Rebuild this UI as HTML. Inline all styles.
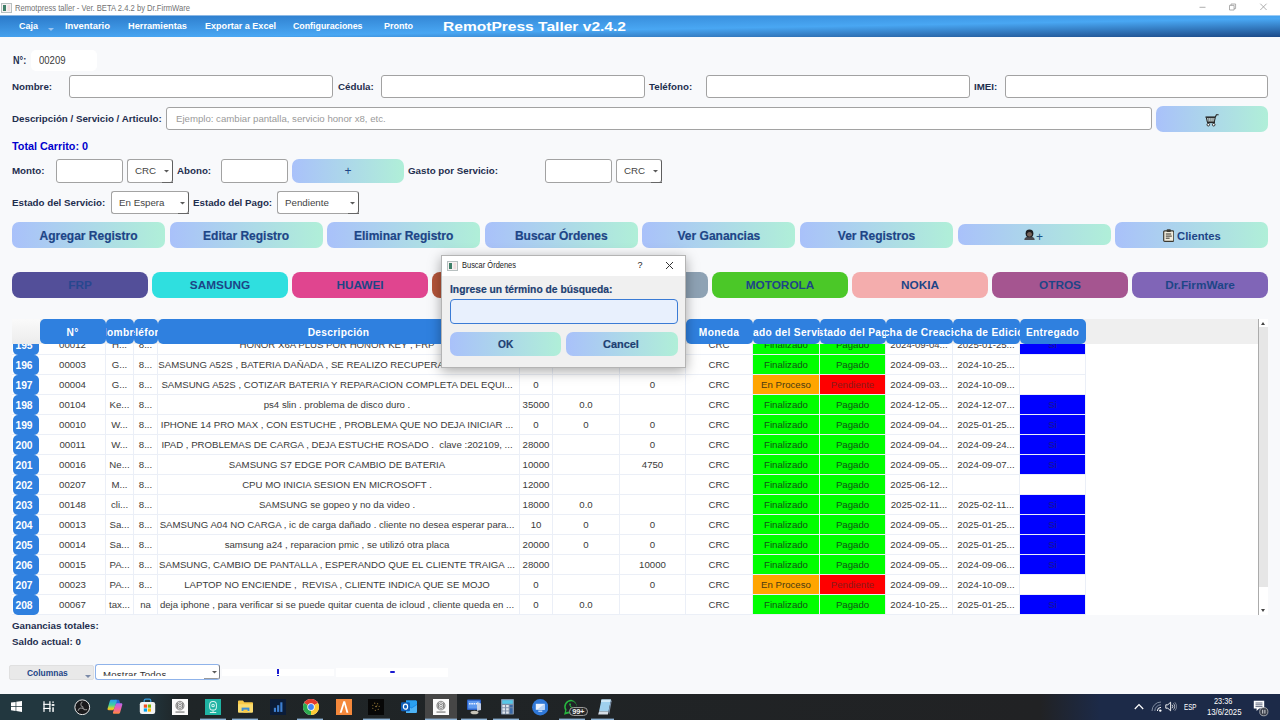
<!DOCTYPE html>
<html><head><meta charset="utf-8">
<style>
*{box-sizing:border-box;margin:0;padding:0}
html,body{width:1280px;height:720px;overflow:hidden;background:#f8f9fb;font-family:"Liberation Sans",sans-serif;}
.a{position:absolute}
.lbl{position:absolute;font-weight:bold;font-size:9.75px;color:#1e2e4e;white-space:nowrap;line-height:14px}
.inp{position:absolute;background:#fff;border:1px solid #a2a2a2;border-radius:3px}
.sel{position:absolute;background:#fff;border:1px solid #a3a3a3;border-right-color:#5e5e5e;border-radius:3px;font-size:9.75px;color:#444;line-height:22px;padding-left:7px;white-space:nowrap}
.sel i{position:absolute;right:3px;top:10px;width:5px;height:2.5px;background:#5a5a5a;clip-path:polygon(0 0,100% 0,50% 100%)}
.sel b{position:absolute;right:-1px;bottom:-1px;width:11px;height:1.5px;background:#666}
.gbtn{position:absolute;border-radius:7px;background:linear-gradient(90deg,#a9c1fa,#b0efd8);color:#1d4587;font-weight:bold;font-size:12px;text-align:center;white-space:nowrap}
.bbtn{position:absolute;top:272px;height:26px;width:136px;border-radius:8px;color:#1d4587;font-weight:bold;font-size:11.8px;text-align:center;line-height:27px}
#titlebar{left:0;top:0;width:1280px;height:16px;background:#fff}
#menubar{left:0;top:15px;width:1280px;height:22px;background:#3a8ee0}
.mi{position:absolute;top:5px;color:#fff;font-weight:bold;font-size:9.15px;line-height:12px;white-space:nowrap}

.row{position:absolute;left:0;width:1074px;height:20px;border-bottom:1px solid #ebeff7}
.rh{position:absolute;left:1px;top:0;width:26px;height:20px;padding-top:1px;background:#2f80df;border-radius:5px;color:#fff;font-weight:bold;font-size:10.3px;line-height:20px;text-align:center;padding-right:4px}
.c{position:absolute;top:0;height:19px;font-size:9.65px;line-height:20px;color:#3a3a3a;text-align:center;white-space:nowrap;overflow:hidden;border-right:1px solid #ebeff7}
.th{position:absolute;top:0;height:25px;background:#2f80df;border-radius:5px;color:#fff;font-weight:bold;font-size:10.2px;line-height:28.5px;text-align:center;white-space:nowrap;overflow:hidden;letter-spacing:0.3px}
.th span{position:absolute;left:50%;top:0;transform:translateX(-50%)}
</style></head><body>
<div id="titlebar" class="a">
  <svg class="a" style="left:1px;top:3px" width="11" height="10" viewBox="0 0 11 10"><rect x="0.5" y="0.5" width="10" height="9" fill="#f6f2f2" stroke="#b8c0c0"/><rect x="2" y="2" width="3" height="6" fill="#3f7f68"/><rect x="6.5" y="2" width="2.5" height="6" fill="#f0dede"/></svg>
  <div class="a" style="left:15px;top:2px;white-space:nowrap;transform-origin:0 0;transform:scaleX(0.8872);font-family:'Liberation Sans',sans-serif;font-size:8.6px;line-height:12px;color:#737373;">Remotpress taller - Ver. BETA 2.4.2 by Dr.FirmWare</div>
  <svg class="a" style="left:1198px;top:3px" width="72" height="10" viewBox="0 0 72 10"><g stroke="#9a9a9a" stroke-width="0.8" fill="none"><path d="M1.500 4.300h6"/><path d="M31.500 2.400h4.600v4.600h-4.600z M33 2.400v-1.400h4.600v4.600h-1.500"/><path d="M62.300 0.700l6.300 6.300M68.600 0.700l-6.300 6.300"/></g></svg>
</div>
<div id="menubar" class="a">
<svg class="a" style="left:0;top:0" width="1280" height="22"><defs><linearGradient id="mb" x1="0" y1="0" x2="1" y2="1"><stop offset="0" stop-color="#2a78c8"/><stop offset="0.58" stop-color="#49a7f3"/><stop offset="1" stop-color="#1c4a88"/></linearGradient></defs><rect width="1280" height="22" fill="url(#mb)"/><rect width="1280" height="1" fill="#fff" opacity="0.45"/></svg>
<div class="a" style="left:19px;top:4.8px;white-space:nowrap;transform-origin:0 0;transform:scaleX(0.9375);font-family:'Liberation Sans',sans-serif;font-weight:bold;font-size:9.6px;line-height:12px;color:#fff;">Caja</div>
<div class="a" style="left:65px;top:4.8px;white-space:nowrap;transform-origin:0 0;transform:scaleX(0.9813);font-family:'Liberation Sans',sans-serif;font-weight:bold;font-size:9.6px;line-height:12px;color:#fff;">Inventario</div>
<div class="a" style="left:128px;top:4.8px;white-space:nowrap;transform-origin:0 0;transform:scaleX(0.9620);font-family:'Liberation Sans',sans-serif;font-weight:bold;font-size:9.6px;line-height:12px;color:#fff;">Herramientas</div>
<div class="a" style="left:205px;top:4.8px;white-space:nowrap;transform-origin:0 0;transform:scaleX(0.9441);font-family:'Liberation Sans',sans-serif;font-weight:bold;font-size:9.6px;line-height:12px;color:#fff;">Exportar a Excel</div>
<div class="a" style="left:293px;top:4.8px;white-space:nowrap;transform-origin:0 0;transform:scaleX(0.9181);font-family:'Liberation Sans',sans-serif;font-weight:bold;font-size:9.6px;line-height:12px;color:#fff;">Configuraciones</div>
<div class="a" style="left:384px;top:4.8px;white-space:nowrap;transform-origin:0 0;transform:scaleX(0.9378);font-family:'Liberation Sans',sans-serif;font-weight:bold;font-size:9.6px;line-height:12px;color:#fff;">Pronto</div>
<div class="a" style="left:442.5px;top:2.5px;white-space:nowrap;transform-origin:0 0;transform:scaleX(1.1793);font-family:'Liberation Sans',sans-serif;font-weight:bold;font-size:13.2px;line-height:18px;color:#fff;">RemotPress Taller v2.4.2</div>

  <div class="a" style="left:48px;top:13px;border:3px solid transparent;border-top:3px solid #9cc4f0;border-bottom:0"></div>
</div>

<!-- form -->
<div class="a" style="left:12.5px;top:53px;white-space:nowrap;transform-origin:0 0;transform:scaleX(0.8323);font-family:'Liberation Sans',sans-serif;font-weight:bold;font-size:10.9px;line-height:14px;color:#1e2e4e;">N°:</div>
<div class="a" style="left:31px;top:50px;width:66px;height:21px;background:#fff;border-radius:5px;"><div class="a" style="left:8px;top:0px;white-space:nowrap;transform-origin:0 0;transform:scaleX(0.8747);font-family:'Liberation Sans',sans-serif;font-size:10.9px;line-height:21px;color:#3a3a3a;">00209</div></div>
<div class="lbl" style="left:12px;top:80px">Nombre:</div>
<div class="inp" style="left:69px;top:75px;width:264px;height:23px"></div>
<div class="lbl" style="left:338px;top:80px">Cédula:</div>
<div class="inp" style="left:381px;top:75px;width:264px;height:23px"></div>
<div class="lbl" style="left:649px;top:80px">Teléfono:</div>
<div class="inp" style="left:706px;top:75px;width:264px;height:23px"></div>
<div class="lbl" style="left:974px;top:80px">IMEI:</div>
<div class="inp" style="left:1005px;top:75px;width:263px;height:23px"></div>

<div class="lbl" style="left:12px;top:112px">Descripción / Servicio / Articulo:</div>
<div class="inp" style="left:166px;top:107px;width:986px;height:23px;font-size:9.65px;line-height:21px;color:#9a9a9a;padding-left:9px">Ejemplo: cambiar pantalla, servicio honor x8, etc.</div>
<div class="gbtn" style="left:1156px;top:106px;width:112px;height:26px"><svg class="a" style="left:49px;top:7.500px" width="14" height="13" viewBox="0 0 14 13"><path d="M0.800 3h9.600l1-2.300h1.800" fill="none" stroke="#222" stroke-width="1.100" stroke-linecap="round"/><path d="M1.300 3.400h9l-1 4.600H2.300z" fill="#b9c4c4" stroke="#222" stroke-width="1"/><path d="M3.600 4v3.600M5.800 4v3.600M8 4v3.600" stroke="#6f7c7c" stroke-width="0.800"/><path d="M2 8.600h8" stroke="#222" stroke-width="1.100"/><circle cx="3.300" cy="10.700" r="1.300" fill="#fff" stroke="#222" stroke-width="0.900"/><circle cx="8.700" cy="10.700" r="1.300" fill="#fff" stroke="#222" stroke-width="0.900"/></svg></div>

<div class="a" style="left:12px;top:139px;font-weight:bold;font-size:10.8px;line-height:14px;color:#0000cd;white-space:nowrap">Total Carrito: 0</div>

<div class="lbl" style="left:12px;top:164px">Monto:</div>
<div class="inp" style="left:56px;top:159px;width:67px;height:24px"></div>
<div class="sel" style="left:127px;top:159px;width:46px;height:24px">CRC<i></i><b></b></div>
<div class="lbl" style="left:177px;top:164px">Abono:</div>
<div class="inp" style="left:221px;top:159px;width:67px;height:24px"></div>
<div class="gbtn" style="left:292px;top:159px;width:112px;height:24px;font-weight:normal;line-height:24px;font-size:12px">+</div>
<div class="lbl" style="left:408px;top:164px">Gasto por Servicio:</div>
<div class="inp" style="left:545px;top:159px;width:67px;height:24px"></div>
<div class="sel" style="left:616px;top:159px;width:46px;height:24px">CRC<i></i><b></b></div>

<div class="lbl" style="left:12px;top:196px">Estado del Servicio:</div>
<div class="sel" style="left:111px;top:191px;width:78px;height:23px;line-height:21px">En Espera<i></i><b></b></div>
<div class="lbl" style="left:193px;top:196px">Estado del Pago:</div>
<div class="sel" style="left:277px;top:191px;width:82px;height:23px;line-height:21px">Pendiente<i></i><b></b></div>

<!-- action buttons -->
<div class="gbtn" style="left:12.0px;top:222px;width:153px;height:26px;line-height:28.5px;-webkit-text-stroke:0.2px #1d4587">Agregar Registro</div>
<div class="gbtn" style="left:169.6px;top:222px;width:153px;height:26px;line-height:28.5px;-webkit-text-stroke:0.2px #1d4587">Editar Registro</div>
<div class="gbtn" style="left:327.2px;top:222px;width:153px;height:26px;line-height:28.5px;-webkit-text-stroke:0.2px #1d4587">Eliminar Registro</div>
<div class="gbtn" style="left:484.8px;top:222px;width:153px;height:26px;line-height:28.5px;-webkit-text-stroke:0.2px #1d4587">Buscar Órdenes</div>
<div class="gbtn" style="left:642.4px;top:222px;width:153px;height:26px;line-height:28.5px;-webkit-text-stroke:0.2px #1d4587">Ver Ganancias</div>
<div class="gbtn" style="left:800.0px;top:222px;width:153px;height:26px;line-height:28.5px;-webkit-text-stroke:0.2px #1d4587">Ver Registros</div>
<div class="gbtn" style="left:957.6px;top:224px;width:153px;height:21px"><svg class="a" style="left:66.500px;top:5px" width="11" height="11" viewBox="0 0 11 11"><path d="M0.300 11c0-2.300 1.500-3.600 5.200-3.600s5.200 1.300 5.200 3.600z" fill="#4a4a50"/><circle cx="5.500" cy="4.400" r="3.900" fill="#1e1e22"/><ellipse cx="5.500" cy="5.300" rx="2.500" ry="2.400" fill="#76635a"/><path d="M2.600 4.300c1-1.600 4.800-1.600 5.800 0l0.200-1.600c-1-2.200-5.200-2.200-6.200 0z" fill="#1e1e22"/></svg><div class="a" style="left:78.500px;top:5.5px;font-size:12px;line-height:14px;font-weight:normal;color:#1d5587">+</div></div>
<div class="gbtn" style="left:1115.2px;top:222px;width:153px;height:26px"><svg class="a" style="left:47.500px;top:6.500px" width="11.500" height="13" viewBox="0 0 11.500 13"><rect x="0.700" y="1.900" width="10.100" height="10.500" rx="1" fill="#f1ecdc" stroke="#3c3a32" stroke-width="1.200"/><rect x="3.600" y="0.300" width="4.300" height="2.600" rx="0.900" fill="#3c3a32"/><path d="M2.800 5h5.400M2.800 7.100h6M2.800 9.200h3.800" stroke="#33302a" stroke-width="1"/></svg><div class="a" style="left:62px;top:6.5px;white-space:nowrap;transform-origin:0 0;transform:scaleX(0.9710);font-family:'Liberation Sans',sans-serif;font-weight:bold;font-size:11.6px;line-height:14px;color:#1d4587;">Clientes</div></div>

<!-- brand buttons -->
<div class="bbtn" style="left:12px;background:#534f99;color:#27478f">FRP</div>
<div class="bbtn" style="left:152px;background:#2fdfdf;color:#1d4587">SAMSUNG</div>
<div class="bbtn" style="left:292px;background:#e0458f;color:#1d4587">HUAWEI</div>
<div class="bbtn" style="left:432px;background:#b4553a;color:#1d4587">XIAOMI</div>
<div class="bbtn" style="left:572px;background:#8ea2b4;color:#1d4587">LG</div>
<div class="bbtn" style="left:712px;background:#4bc828;color:#1d4587">MOTOROLA</div>
<div class="bbtn" style="left:852px;background:#f4adad;color:#1d4587">NOKIA</div>
<div class="bbtn" style="left:992px;background:#a55590;color:#1d4587">OTROS</div>
<div class="bbtn" style="left:1132px;background:#8065b7;color:#1d4587">Dr.FirmWare</div>


<!-- table -->
<div id="table" class="a" style="left:12px;top:319px;width:1256px;height:296px;background:#fff;overflow:hidden">
<div class="row" style="top:16px"><div class="rh">195</div><div class="c" style="left:28px;width:66px;">00012</div><div class="c" style="left:94px;width:28px;">H...</div><div class="c" style="left:122px;width:24px;">8...</div><div class="c" style="left:146px;width:362px;padding-right:3px;">HONOR X6A PLUS POR HONOR KEY , FRP</div><div class="c" style="left:508px;width:33px;">15000</div><div class="c" style="left:541px;width:67px;"></div><div class="c" style="left:608px;width:66px;"></div><div class="c" style="left:674px;width:67px;">CRC</div><div class="c" style="left:741px;width:67px;background:#00ff00;color:#14501a;">Finalizado</div><div class="c" style="left:808px;width:66px;background:#00ff00;color:#14501a;">Pagado</div><div class="c" style="left:874px;width:67px;">2024-09-04...</div><div class="c" style="left:941px;width:67px;">2025-01-25...</div><div class="c" style="left:1008px;width:66px;background:#0000ff;color:#1a1a8a;">Si</div></div>
<div class="row" style="top:36px"><div class="rh">196</div><div class="c" style="left:28px;width:66px;">00003</div><div class="c" style="left:94px;width:28px;">G...</div><div class="c" style="left:122px;width:24px;">8...</div><div class="c" style="left:146px;width:362px;padding-right:3px;">SAMSUNG A52S , BATERIA DAÑADA , SE REALIZO RECUPERACION DE DAT ...</div><div class="c" style="left:508px;width:33px;">12000</div><div class="c" style="left:541px;width:67px;">0</div><div class="c" style="left:608px;width:66px;">0</div><div class="c" style="left:674px;width:67px;">CRC</div><div class="c" style="left:741px;width:67px;background:#00ff00;color:#14501a;">Finalizado</div><div class="c" style="left:808px;width:66px;background:#00ff00;color:#14501a;">Pagado</div><div class="c" style="left:874px;width:67px;">2024-09-03...</div><div class="c" style="left:941px;width:67px;">2024-10-25...</div><div class="c" style="left:1008px;width:66px;"></div></div>
<div class="row" style="top:56px"><div class="rh">197</div><div class="c" style="left:28px;width:66px;">00004</div><div class="c" style="left:94px;width:28px;">G...</div><div class="c" style="left:122px;width:24px;">8...</div><div class="c" style="left:146px;width:362px;padding-right:3px;">SAMSUNG A52S , COTIZAR BATERIA Y REPARACION COMPLETA DEL EQUI...</div><div class="c" style="left:508px;width:33px;">0</div><div class="c" style="left:541px;width:67px;"></div><div class="c" style="left:608px;width:66px;">0</div><div class="c" style="left:674px;width:67px;">CRC</div><div class="c" style="left:741px;width:67px;background:#ffa500;color:#4a3a14;">En Proceso</div><div class="c" style="left:808px;width:66px;background:#ff0000;color:#8a1a1a;">Pendiente</div><div class="c" style="left:874px;width:67px;">2024-09-03...</div><div class="c" style="left:941px;width:67px;">2024-10-09...</div><div class="c" style="left:1008px;width:66px;"></div></div>
<div class="row" style="top:76px"><div class="rh">198</div><div class="c" style="left:28px;width:66px;">00104</div><div class="c" style="left:94px;width:28px;">Ke...</div><div class="c" style="left:122px;width:24px;">8...</div><div class="c" style="left:146px;width:362px;padding-right:3px;">ps4 slin . problema de disco duro .</div><div class="c" style="left:508px;width:33px;">35000</div><div class="c" style="left:541px;width:67px;">0.0</div><div class="c" style="left:608px;width:66px;"></div><div class="c" style="left:674px;width:67px;">CRC</div><div class="c" style="left:741px;width:67px;background:#00ff00;color:#14501a;">Finalizado</div><div class="c" style="left:808px;width:66px;background:#00ff00;color:#14501a;">Pagado</div><div class="c" style="left:874px;width:67px;">2024-12-05...</div><div class="c" style="left:941px;width:67px;">2024-12-07...</div><div class="c" style="left:1008px;width:66px;background:#0000ff;color:#1a1a8a;">Si</div></div>
<div class="row" style="top:96px"><div class="rh">199</div><div class="c" style="left:28px;width:66px;">00010</div><div class="c" style="left:94px;width:28px;">W...</div><div class="c" style="left:122px;width:24px;">8...</div><div class="c" style="left:146px;width:362px;padding-right:3px;">IPHONE 14 PRO MAX , CON ESTUCHE , PROBLEMA QUE NO DEJA INICIAR ...</div><div class="c" style="left:508px;width:33px;">0</div><div class="c" style="left:541px;width:67px;">0</div><div class="c" style="left:608px;width:66px;">0</div><div class="c" style="left:674px;width:67px;">CRC</div><div class="c" style="left:741px;width:67px;background:#00ff00;color:#14501a;">Finalizado</div><div class="c" style="left:808px;width:66px;background:#00ff00;color:#14501a;">Pagado</div><div class="c" style="left:874px;width:67px;">2024-09-04...</div><div class="c" style="left:941px;width:67px;">2025-01-25...</div><div class="c" style="left:1008px;width:66px;background:#0000ff;color:#1a1a8a;">Si</div></div>
<div class="row" style="top:116px"><div class="rh">200</div><div class="c" style="left:28px;width:66px;">00011</div><div class="c" style="left:94px;width:28px;">W...</div><div class="c" style="left:122px;width:24px;">8...</div><div class="c" style="left:146px;width:362px;padding-right:3px;">IPAD , PROBLEMAS DE CARGA , DEJA ESTUCHE ROSADO .&nbsp; clave :202109, ...</div><div class="c" style="left:508px;width:33px;">28000</div><div class="c" style="left:541px;width:67px;"></div><div class="c" style="left:608px;width:66px;">0</div><div class="c" style="left:674px;width:67px;">CRC</div><div class="c" style="left:741px;width:67px;background:#00ff00;color:#14501a;">Finalizado</div><div class="c" style="left:808px;width:66px;background:#00ff00;color:#14501a;">Pagado</div><div class="c" style="left:874px;width:67px;">2024-09-04...</div><div class="c" style="left:941px;width:67px;">2024-09-24...</div><div class="c" style="left:1008px;width:66px;background:#0000ff;color:#1a1a8a;">Si</div></div>
<div class="row" style="top:136px"><div class="rh">201</div><div class="c" style="left:28px;width:66px;">00016</div><div class="c" style="left:94px;width:28px;">Ne...</div><div class="c" style="left:122px;width:24px;">8...</div><div class="c" style="left:146px;width:362px;padding-right:3px;">SAMSUNG S7 EDGE POR CAMBIO DE BATERIA</div><div class="c" style="left:508px;width:33px;">10000</div><div class="c" style="left:541px;width:67px;"></div><div class="c" style="left:608px;width:66px;">4750</div><div class="c" style="left:674px;width:67px;">CRC</div><div class="c" style="left:741px;width:67px;background:#00ff00;color:#14501a;">Finalizado</div><div class="c" style="left:808px;width:66px;background:#00ff00;color:#14501a;">Pagado</div><div class="c" style="left:874px;width:67px;">2024-09-05...</div><div class="c" style="left:941px;width:67px;">2024-09-07...</div><div class="c" style="left:1008px;width:66px;background:#0000ff;color:#1a1a8a;">Si</div></div>
<div class="row" style="top:156px"><div class="rh">202</div><div class="c" style="left:28px;width:66px;">00207</div><div class="c" style="left:94px;width:28px;">M...</div><div class="c" style="left:122px;width:24px;">8...</div><div class="c" style="left:146px;width:362px;padding-right:3px;">CPU MO INICIA SESION EN MICROSOFT .</div><div class="c" style="left:508px;width:33px;">12000</div><div class="c" style="left:541px;width:67px;"></div><div class="c" style="left:608px;width:66px;"></div><div class="c" style="left:674px;width:67px;">CRC</div><div class="c" style="left:741px;width:67px;background:#00ff00;color:#14501a;">Finalizado</div><div class="c" style="left:808px;width:66px;background:#00ff00;color:#14501a;">Pagado</div><div class="c" style="left:874px;width:67px;">2025-06-12...</div><div class="c" style="left:941px;width:67px;"></div><div class="c" style="left:1008px;width:66px;"></div></div>
<div class="row" style="top:176px"><div class="rh">203</div><div class="c" style="left:28px;width:66px;">00148</div><div class="c" style="left:94px;width:28px;">cli...</div><div class="c" style="left:122px;width:24px;">8...</div><div class="c" style="left:146px;width:362px;padding-right:3px;">SAMSUNG se gopeo y no da video .</div><div class="c" style="left:508px;width:33px;">18000</div><div class="c" style="left:541px;width:67px;">0.0</div><div class="c" style="left:608px;width:66px;"></div><div class="c" style="left:674px;width:67px;">CRC</div><div class="c" style="left:741px;width:67px;background:#00ff00;color:#14501a;">Finalizado</div><div class="c" style="left:808px;width:66px;background:#00ff00;color:#14501a;">Pagado</div><div class="c" style="left:874px;width:67px;">2025-02-11...</div><div class="c" style="left:941px;width:67px;">2025-02-11...</div><div class="c" style="left:1008px;width:66px;background:#0000ff;color:#1a1a8a;">Si</div></div>
<div class="row" style="top:196px"><div class="rh">204</div><div class="c" style="left:28px;width:66px;">00013</div><div class="c" style="left:94px;width:28px;">Sa...</div><div class="c" style="left:122px;width:24px;">8...</div><div class="c" style="left:146px;width:362px;padding-right:3px;">SAMSUNG A04 NO CARGA , ic de carga dañado . cliente no desea esperar para...</div><div class="c" style="left:508px;width:33px;">10</div><div class="c" style="left:541px;width:67px;">0</div><div class="c" style="left:608px;width:66px;">0</div><div class="c" style="left:674px;width:67px;">CRC</div><div class="c" style="left:741px;width:67px;background:#00ff00;color:#14501a;">Finalizado</div><div class="c" style="left:808px;width:66px;background:#00ff00;color:#14501a;">Pagado</div><div class="c" style="left:874px;width:67px;">2024-09-05...</div><div class="c" style="left:941px;width:67px;">2025-01-25...</div><div class="c" style="left:1008px;width:66px;background:#0000ff;color:#1a1a8a;">Si</div></div>
<div class="row" style="top:216px"><div class="rh">205</div><div class="c" style="left:28px;width:66px;">00014</div><div class="c" style="left:94px;width:28px;">Sa...</div><div class="c" style="left:122px;width:24px;">8...</div><div class="c" style="left:146px;width:362px;padding-right:3px;">samsung a24 , reparacion pmic , se utilizó otra placa</div><div class="c" style="left:508px;width:33px;">20000</div><div class="c" style="left:541px;width:67px;">0</div><div class="c" style="left:608px;width:66px;">0</div><div class="c" style="left:674px;width:67px;">CRC</div><div class="c" style="left:741px;width:67px;background:#00ff00;color:#14501a;">Finalizado</div><div class="c" style="left:808px;width:66px;background:#00ff00;color:#14501a;">Pagado</div><div class="c" style="left:874px;width:67px;">2024-09-05...</div><div class="c" style="left:941px;width:67px;">2025-01-25...</div><div class="c" style="left:1008px;width:66px;background:#0000ff;color:#1a1a8a;">Si</div></div>
<div class="row" style="top:236px"><div class="rh">206</div><div class="c" style="left:28px;width:66px;">00015</div><div class="c" style="left:94px;width:28px;">PA...</div><div class="c" style="left:122px;width:24px;">8...</div><div class="c" style="left:146px;width:362px;padding-right:3px;">SAMSUNG, CAMBIO DE PANTALLA , ESPERANDO QUE EL CLIENTE TRAIGA ...</div><div class="c" style="left:508px;width:33px;">28000</div><div class="c" style="left:541px;width:67px;"></div><div class="c" style="left:608px;width:66px;">10000</div><div class="c" style="left:674px;width:67px;">CRC</div><div class="c" style="left:741px;width:67px;background:#00ff00;color:#14501a;">Finalizado</div><div class="c" style="left:808px;width:66px;background:#00ff00;color:#14501a;">Pagado</div><div class="c" style="left:874px;width:67px;">2024-09-05...</div><div class="c" style="left:941px;width:67px;">2024-09-06...</div><div class="c" style="left:1008px;width:66px;background:#0000ff;color:#1a1a8a;">Si</div></div>
<div class="row" style="top:256px"><div class="rh">207</div><div class="c" style="left:28px;width:66px;">00023</div><div class="c" style="left:94px;width:28px;">PA...</div><div class="c" style="left:122px;width:24px;">8...</div><div class="c" style="left:146px;width:362px;padding-right:3px;">LAPTOP NO ENCIENDE ,&nbsp; REVISA , CLIENTE INDICA QUE SE MOJO</div><div class="c" style="left:508px;width:33px;">0</div><div class="c" style="left:541px;width:67px;"></div><div class="c" style="left:608px;width:66px;">0</div><div class="c" style="left:674px;width:67px;">CRC</div><div class="c" style="left:741px;width:67px;background:#ffa500;color:#4a3a14;">En Proceso</div><div class="c" style="left:808px;width:66px;background:#ff0000;color:#8a1a1a;">Pendiente</div><div class="c" style="left:874px;width:67px;">2024-09-09...</div><div class="c" style="left:941px;width:67px;">2024-10-09...</div><div class="c" style="left:1008px;width:66px;"></div></div>
<div class="row" style="top:276px"><div class="rh">208</div><div class="c" style="left:28px;width:66px;">00067</div><div class="c" style="left:94px;width:28px;">tax...</div><div class="c" style="left:122px;width:24px;">na</div><div class="c" style="left:146px;width:362px;padding-right:3px;">deja iphone , para verificar si se puede quitar cuenta de icloud , cliente queda en ...</div><div class="c" style="left:508px;width:33px;">0</div><div class="c" style="left:541px;width:67px;">0.0</div><div class="c" style="left:608px;width:66px;"></div><div class="c" style="left:674px;width:67px;">CRC</div><div class="c" style="left:741px;width:67px;background:#00ff00;color:#14501a;">Finalizado</div><div class="c" style="left:808px;width:66px;background:#00ff00;color:#14501a;">Pagado</div><div class="c" style="left:874px;width:67px;">2024-10-25...</div><div class="c" style="left:941px;width:67px;">2025-01-25...</div><div class="c" style="left:1008px;width:66px;background:#0000ff;color:#1a1a8a;">Si</div></div>
<div class="a" style="left:0;top:0;width:1246px;height:25px;background:#efefef"></div><div class="a" style="left:0;top:0;width:28px;height:25px;background:linear-gradient(180deg,#fafafa,#ececec)"></div><div class="th" style="left:27.5px;width:66px"><span>N°</span></div><div class="th" style="left:93.5px;width:28px"><span>Nombre</span></div><div class="th" style="left:121.5px;width:24px"><span>Teléfono</span></div><div class="th" style="left:145.5px;width:362px"><span>Descripción</span></div><div class="th" style="left:507.5px;width:33px"><span>Monto</span></div><div class="th" style="left:540.5px;width:67px"><span>Abono</span></div><div class="th" style="left:607.5px;width:66px"><span>Gasto</span></div><div class="th" style="left:673.5px;width:67px"><span>Moneda</span></div><div class="th" style="left:740.5px;width:67px"><span>Estado del Servicio</span></div><div class="th" style="left:807.5px;width:66px"><span>Estado del Pago</span></div><div class="th" style="left:873.5px;width:67px"><span>Fecha de Creación</span></div><div class="th" style="left:940.5px;width:67px"><span>Fecha de Edición</span></div><div class="th" style="left:1007.5px;width:66px"><span>Entregado</span></div><div class="a" style="left:1246px;top:0;width:10px;height:296px;background:#fff;border-left:1px solid #ababab"></div><div class="a" style="left:1247px;top:8px;width:9px;height:260px;background:#e6e6e6"></div><div class="a" style="left:1249px;top:3px;border:2.5px solid transparent;border-bottom:3px solid #444;border-top:0"></div><div class="a" style="left:1249px;top:290px;border:2.5px solid transparent;border-top:3px solid #444;border-bottom:0"></div>
</div>

<div class="lbl" style="left:12px;top:619px">Ganancias totales:</div>
<div class="lbl" style="left:12px;top:635px">Saldo actual: 0</div>


<!-- bottom controls -->
<div class="a" style="left:9px;top:665px;width:85px;height:15px;background:#e9e9e9;border:1px solid #e0e0e0;border-radius:2px;"><div class="a" style="left:17.2px;top:-0.3px;white-space:nowrap;transform-origin:0 0;transform:scaleX(0.9001);font-family:'Liberation Sans',sans-serif;font-weight:bold;font-size:9.4px;line-height:13px;color:#1d4587;">Columnas</div></div>
<div class="a" style="left:85px;top:675px;border:3px solid transparent;border-top:3px solid #7a8aa8;border-bottom:0"></div>
<div class="a" style="left:95px;top:664px;width:125px;height:16px;background:#fff;border:1px solid #8fb3ea;border-right-color:#7a7f88;border-radius:3px;overflow:hidden"><div class="a" style="left:7px;top:4px;height:6.5px;overflow:hidden;font-size:9.65px;line-height:12px;color:#333;white-space:nowrap;letter-spacing:0.2px">Mostrar Todos</div><div class="a" style="left:116px;top:6px;width:5px;height:2.5px;background:#5a5a5a;clip-path:polygon(0 0,100% 0,50% 100%)"></div><div class="a" style="left:108px;top:13px;width:16px;height:2px;background:#9a9a9a"></div></div>
<div class="a" style="left:222px;top:669px;width:112px;height:7px;background:#fff"></div>
<div class="a" style="left:336px;top:668px;width:112px;height:9px;background:#fff"></div>
<div class="a" style="left:277px;top:669px;width:2px;height:5px;background:#1a1ad0"></div>
<div class="a" style="left:277px;top:675px;width:2px;height:1px;background:#1a1ad0"></div>
<div class="a" style="left:389.5px;top:671px;width:5px;height:2px;background:#1a1ad0;border-radius:1px"></div>

<!-- dialog -->
<div class="a" style="left:441px;top:255px;width:245px;height:113px;background:#f0f0f0;border:1px solid #b4b4b4;box-shadow:0 3px 12px rgba(0,0,0,.35)">
  <div class="a" style="left:0;top:0;width:243px;height:20px;background:#fff"></div>
  <svg class="a" style="left:5px;top:5px" width="11" height="10" viewBox="0 0 11 10"><rect x="0.5" y="0.5" width="10" height="9" fill="#f6f2f2" stroke="#b8c0c0"/><rect x="2" y="2" width="3" height="6" fill="#3f7f68"/><rect x="6.5" y="2" width="2.5" height="6" fill="#f0dede"/></svg>
<div class="a" style="left:20px;top:3px;white-space:nowrap;transform-origin:0 0;transform:scaleX(0.8694);font-family:'Liberation Sans',sans-serif;font-size:8.6px;line-height:13px;color:#222;">Buscar Órdenes</div>
  <div class="a" style="left:195.5px;top:3px;font-size:9px;line-height:13px;color:#222">?</div>
  <svg class="a" style="left:223px;top:5px" width="9" height="9" viewBox="0 0 9 9"><path d="M1 1l7 7M8 1l-7 7" stroke="#333" stroke-width="1" fill="none"/></svg>
<div class="a" style="left:7.6px;top:25.5px;white-space:nowrap;transform-origin:0 0;transform:scaleX(0.9204);font-family:'Liberation Sans',sans-serif;font-weight:bold;color:#1d4072;font-size:11.2px;line-height:14px;-webkit-text-stroke:0.2px #1d4072;">Ingrese un término de búsqueda:</div>
  <div class="a" style="left:8px;top:43px;width:227.5px;height:25px;background:#e8f0fd;border:1.5px solid #3a7bd5;border-radius:4px"></div>
  <div class="gbtn" style="left:8px;top:76px;width:111px;height:24px"><div class="a" style="left:47.5px;top:4.5px;white-space:nowrap;transform-origin:0 0;transform:scaleX(0.9212);font-family:'Liberation Sans',sans-serif;font-weight:bold;color:#1d4072;font-size:11px;line-height:14px;-webkit-text-stroke:0.2px #1d4072;">OK</div></div>
  <div class="gbtn" style="left:124px;top:76px;width:112px;height:24px"><div class="a" style="left:37.39999999999998px;top:4.5px;white-space:nowrap;transform-origin:0 0;transform:scaleX(0.9951);font-family:'Liberation Sans',sans-serif;font-weight:bold;color:#1d4072;font-size:11px;line-height:14px;-webkit-text-stroke:0.2px #1d4072;">Cancel</div></div>
</div>

<!-- taskbar -->
<div id="taskbar" class="a" style="left:0;top:694px;width:1280px;height:26px;background:linear-gradient(90deg,#22373f 0,#22373f 145px,#1f2527 180px,#212224 1040px,#1c2a48 1100px,#1c2a48 1280px)">
<div class="a" style="left:425px;top:0px;width:32px;height:26px;background:#464646"></div>
<div class="a" style="left:200px;top:25px;width:26px;height:1px;background:#8eb3d6"></div><div class="a" style="left:200px;top:24px;width:26px;height:1px;background:#8eb3d6;opacity:0.4"></div>
<div class="a" style="left:232px;top:25px;width:26px;height:1px;background:#8eb3d6"></div><div class="a" style="left:232px;top:24px;width:26px;height:1px;background:#8eb3d6;opacity:0.4"></div>
<div class="a" style="left:297px;top:25px;width:26px;height:1px;background:#8eb3d6"></div><div class="a" style="left:297px;top:24px;width:26px;height:1px;background:#8eb3d6;opacity:0.4"></div>
<div class="a" style="left:363px;top:25px;width:27px;height:1px;background:#8eb3d6"></div><div class="a" style="left:363px;top:24px;width:27px;height:1px;background:#8eb3d6;opacity:0.4"></div>
<div class="a" style="left:425px;top:25px;width:32px;height:1px;background:#8eb3d6"></div><div class="a" style="left:425px;top:24px;width:32px;height:1px;background:#8eb3d6;opacity:0.4"></div>
<div class="a" style="left:461px;top:25px;width:26px;height:1px;background:#8eb3d6"></div><div class="a" style="left:461px;top:24px;width:26px;height:1px;background:#8eb3d6;opacity:0.4"></div>
<div class="a" style="left:493px;top:25px;width:26px;height:1px;background:#8eb3d6"></div><div class="a" style="left:493px;top:24px;width:26px;height:1px;background:#8eb3d6;opacity:0.4"></div>
<div class="a" style="left:559px;top:25px;width:26px;height:1px;background:#8eb3d6"></div><div class="a" style="left:559px;top:24px;width:26px;height:1px;background:#8eb3d6;opacity:0.4"></div>
<div class="a" style="left:591px;top:25px;width:23px;height:1px;background:#8eb3d6"></div><div class="a" style="left:591px;top:24px;width:23px;height:1px;background:#8eb3d6;opacity:0.4"></div>
<svg class="a" style="left:11px;top:7px" width="11" height="11" viewBox="0 0 11 11" preserveAspectRatio="none"><path d="M0 1.6L4.6 0.9V5.1H0z M5.3 0.8L11 0V5.1H5.3z M0 5.8H4.6V10L0 9.3z M5.3 5.8H11V11L5.3 10.1z" fill="#fff"/></svg>
<svg class="a" style="left:42.5px;top:7px" width="12" height="11" viewBox="0 0 12 11" preserveAspectRatio="none"><g fill="#fff"><rect x="0.4" y="0.2" width="1.2" height="10.700"/><rect x="6.300" y="0.200" width="1.200" height="10.700"/><rect x="0.400" y="2.800" width="7.100" height="1.100"/><rect x="0.400" y="6.900" width="7.100" height="1.100"/><rect x="9.300" y="0.500" width="1.500" height="1.300"/><rect x="8.700" y="3.100" width="2.700" height="1.800"/><rect x="9.300" y="6.300" width="1.500" height="4.600"/></g></svg>
<svg class="a" style="left:74px;top:4.5px" width="16.5" height="16.5" viewBox="0 0 16.5 16.5" preserveAspectRatio="none"><circle cx="8.25" cy="8.25" r="7.4" fill="#1a1a1c" stroke="#e8e8e8" stroke-width="1"/><g fill="none" stroke="#8a8a8a" stroke-width="1.1" stroke-linecap="round"><path d="M8 3.2c-1.8 1.6-1.3 3.7 0.4 4.6"/><path d="M12.6 10.6c-2.2 0.6-3.8-0.8-3.9-2.7"/><path d="M4.2 11.4c0.7-2.2 2.7-2.9 4.4-1.9"/></g></svg>
<svg class="a" style="left:107px;top:5px" width="16" height="16" viewBox="0 0 16 16" preserveAspectRatio="none"><defs><linearGradient id="cp1" x1="0" y1="0" x2="0" y2="1"><stop offset="0" stop-color="#2a9cf2"/><stop offset="0.5" stop-color="#3fd0a0"/><stop offset="0.85" stop-color="#e6d21e"/><stop offset="1" stop-color="#f0a030"/></linearGradient><linearGradient id="cp2" x1="0" y1="0" x2="0" y2="1"><stop offset="0" stop-color="#b266f2"/><stop offset="0.5" stop-color="#f060a8"/><stop offset="1" stop-color="#ff8a3c"/></linearGradient></defs><path d="M8.300 0.800h2.600c1 0 1.500 0.500 1.700 1.500l0.600 2.700h-4z" fill="#2463d4"/><path d="M4.400 0.800h4.400c0.900 0 1.300 0.600 1 1.500L7.300 9.800c-0.300 0.900-1 1.400-1.900 1.400H1.700c-0.900 0-1.400-0.700-1.100-1.600L2.800 2.100C3.100 1.300 3.600 0.800 4.400 0.800z" fill="url(#cp1)"/><path d="M10.600 4.200h3.600c0.900 0 1.400 0.700 1.100 1.600l-2.200 7.600c-0.300 0.900-0.900 1.400-1.800 1.400H7.100c-0.900 0-1.400-0.600-1.100-1.500l2.500-7.700c0.300-0.900 1.100-1.400 2.100-1.400z" fill="url(#cp2)"/></svg>
<svg class="a" style="left:139px;top:4px" width="17" height="17" viewBox="0 0 17 17" preserveAspectRatio="none"><path d="M5.2 4.200V2.600c0-0.900 0.600-1.500 1.500-1.500h3.600c0.900 0 1.500 0.600 1.500 1.500v1.600" fill="none" stroke="#39a0e0" stroke-width="1.2"/><rect x="0.800" y="4" width="15.400" height="12" rx="2.200" fill="#f3f3f3"/><rect x="4.800" y="6.500" width="3.200" height="3.200" fill="#f25022"/><rect x="8.800" y="6.500" width="3.200" height="3.200" fill="#7fba00"/><rect x="4.800" y="10.400" width="3.200" height="3.200" fill="#00a4ef"/><rect x="8.800" y="10.400" width="3.200" height="3.200" fill="#ffb900"/></svg>
<svg class="a" style="left:172px;top:5px" width="16" height="16" viewBox="0 0 16.5 15.5" preserveAspectRatio="none"><rect width="16.500" height="15.500" fill="#fbfbfb"/><g fill="none" stroke="#6f6f6f" stroke-width="0.8"><circle cx="8.200" cy="6.400" r="4.200"/><circle cx="8.200" cy="6.400" r="2.800"/><circle cx="8.200" cy="6.400" r="1.300"/><path d="M5.300 3.400v6M11.100 3.400v6"/></g><rect x="3.600" y="12" width="9.300" height="1.300" fill="#8a8a8a"/></svg>
<svg class="a" style="left:205px;top:5px" width="16" height="16" viewBox="0 0 16.5 15.5" preserveAspectRatio="none"><rect width="16.500" height="15.500" fill="#1fb3a3"/><g fill="none" stroke="#d8f4f0" stroke-width="1"><rect x="4.800" y="2.500" width="7" height="8.200" rx="3.300"/><circle cx="8.300" cy="6.300" r="1.300"/><path d="M5 13h6.600M8.300 10.800v2"/></g></svg>
<svg class="a" style="left:238px;top:6px" width="15" height="13" viewBox="0 0 15 13" preserveAspectRatio="none"><path d="M0 1.500c0-0.500 0.400-0.900 0.900-0.900h4l1.400 1.600h7.800c0.500 0 0.900 0.400 0.900 0.900v8.600H0z" fill="#f7c948"/><path d="M0 4.200h15v7.600c0 0.500-0.400 0.900-0.900 0.900H0.900c-0.500 0-0.900-0.400-0.900-0.900z" fill="#fbdc6e"/><rect x="3.600" y="7.600" width="7.800" height="3.400" fill="#3c8ed8"/><rect x="5.400" y="9.600" width="4.200" height="3.100" fill="#f7c948"/></svg>
<svg class="a" style="left:270px;top:5px" width="16" height="16" viewBox="0 0 16.5 15.5" preserveAspectRatio="none"><rect width="16.500" height="15.500" fill="#0b1c38"/><rect x="4" y="8.500" width="2.200" height="4" fill="#3d7fd0"/><rect x="7.300" y="6" width="2.200" height="6.500" fill="#3d7fd0"/><rect x="10.600" y="3.200" width="2.200" height="9.300" fill="#3d7fd0"/></svg>
<svg class="a" style="left:303px;top:5px" width="16" height="16" viewBox="0 0 16 16" preserveAspectRatio="none"><circle cx="8" cy="8" r="8" fill="#fff"/><path d="M8 8L1.070 4A8 8 0 0 1 14.930 4z" fill="#e33b2e"/><path d="M8 8L14.930 4A8 8 0 0 1 8 16z" fill="#fcc934"/><path d="M8 8L8 16A8 8 0 0 1 1.070 4z" fill="#2da94f"/><circle cx="8" cy="8" r="3.700" fill="#fff"/><circle cx="8" cy="8" r="2.900" fill="#4285f4"/></svg>
<svg class="a" style="left:335.5px;top:5px" width="16" height="16" viewBox="0 0 16.5 15.5" preserveAspectRatio="none"><rect width="16.500" height="15.500" fill="#f4883b"/><path d="M7.600 2.200h1.800l3.400 11h-2l-2.300-8.200-2.700 8.200h-2z" fill="#fff"/></svg>
<svg class="a" style="left:368px;top:5px" width="16" height="16" viewBox="0 0 16.5 15.5" preserveAspectRatio="none"><rect width="16.500" height="15.500" fill="#070707"/><g fill="#c9a24a"><circle cx="5" cy="6" r="0.500"/><circle cx="7" cy="4" r="0.500"/><circle cx="10" cy="4.500" r="0.500"/><circle cx="11.500" cy="7" r="0.500"/><circle cx="10.500" cy="10" r="0.500"/><circle cx="7.500" cy="11" r="0.500"/><circle cx="5" cy="9" r="0.500"/><circle cx="8.300" cy="7.300" r="0.700"/><circle cx="9.300" cy="6.200" r="0.400"/></g></svg>
<svg class="a" style="left:401px;top:5px" width="16" height="15" viewBox="0 0 16 15" preserveAspectRatio="none"><path d="M5 1.500h9.500c0.800 0 1.500 0.600 1.500 1.400v9.600c0 0.800-0.700 1.500-1.500 1.500H5z" fill="#1e88e5"/><path d="M5 6l5.500 3.500L16 6v6.500c0 0.800-0.700 1.500-1.500 1.500H5z" fill="#4db3f5"/><path d="M5 1.500h9.500c0.800 0 1.500 0.600 1.500 1.400V5l-5.500 3.600L5 5z" fill="#2aa0f0"/><rect x="0" y="3.200" width="9" height="9" rx="1.200" fill="#0f5fb8"/><ellipse cx="4.500" cy="7.700" rx="2.100" ry="2.500" fill="none" stroke="#fff" stroke-width="1.200"/></svg>
<svg class="a" style="left:433px;top:5px" width="16" height="16" viewBox="0 0 16.5 15.5" preserveAspectRatio="none"><rect width="16.500" height="15.500" fill="#fbfbfb"/><g fill="none" stroke="#6f6f6f" stroke-width="0.8"><circle cx="8.200" cy="6.400" r="4.200"/><circle cx="8.200" cy="6.400" r="2.800"/><circle cx="8.200" cy="6.400" r="1.300"/><path d="M5.300 3.400v6M11.100 3.400v6"/></g><rect x="3.600" y="12" width="9.300" height="1.300" fill="#8a8a8a"/></svg>
<svg class="a" style="left:466px;top:5px" width="16" height="16" viewBox="0 0 16 16" preserveAspectRatio="none"><rect x="1" y="0.500" width="14" height="10.500" rx="1" fill="#2c62c8"/><rect x="2.200" y="1.800" width="11.600" height="7.800" fill="#5f9af0"/><g fill="#e8f0ff"><rect x="3" y="4" width="1.600" height="1.500"/><rect x="5.300" y="4" width="1.600" height="1.500"/><rect x="7.600" y="4" width="1.600" height="1.500"/><rect x="9.900" y="4" width="1.600" height="1.500"/></g><path d="M11 3l4 1.500v6.500l-4 1z" fill="#d8dde8" opacity="0.850"/><ellipse cx="8.500" cy="13.500" rx="4" ry="1.800" fill="#c8c4b8"/></svg>
<svg class="a" style="left:500.5px;top:5px" width="13" height="15.5" viewBox="0 0 13 15.5" preserveAspectRatio="none"><rect width="13" height="15.500" rx="0.800" fill="#7d8fa6"/><rect x="1.200" y="1.200" width="10.600" height="3.600" fill="#57c8e8"/><g fill="#dfe6ee"><rect x="1.400" y="6" width="2.600" height="2.300"/><rect x="5.100" y="6" width="2.600" height="2.300"/><rect x="1.400" y="9.200" width="2.600" height="2.300"/><rect x="5.100" y="9.200" width="2.600" height="2.300"/><rect x="1.400" y="12.400" width="2.600" height="2.300"/><rect x="5.100" y="12.400" width="2.600" height="2.300"/></g><g fill="#3a6aa8"><rect x="8.800" y="6" width="2.800" height="2.300"/><rect x="8.800" y="9.200" width="2.800" height="5.500"/></g></svg>
<svg class="a" style="left:531.5px;top:5px" width="16.5" height="16.5" viewBox="0 0 16.5 16.5" preserveAspectRatio="none"><circle cx="8.250" cy="8.250" r="8.200" fill="#2f78d8"/><path d="M3.800 4.800h8.900v6h-8.900z" fill="#eaf2ff"/><path d="M12.700 4.800v6H5z" fill="#b8d4f8"/><rect x="6.300" y="11.600" width="4" height="1.100" fill="#eaf2ff"/></svg>
<svg class="a" style="left:563px;top:4.5px" width="17" height="17" viewBox="0 0 17 17" preserveAspectRatio="none"><path d="M8.200 0.800a7 7 0 0 0-6 10.600L1 15.800l4.500-1.200A7 7 0 1 0 8.200 0.800z" fill="#27b43e"/><path d="M8.200 2.300a5.500 5.500 0 0 0-4.600 8.500l-0.600 2.500 2.600-0.700A5.500 5.500 0 1 0 8.200 2.300z" fill="#1f2326"/><path d="M6 4.800c0.500 2.800 2 4.300 4.600 5l0.800-1.100-1.300-0.900-0.700 0.500c-0.900-0.500-1.500-1.200-1.900-2.100l0.600-0.600-0.700-1.400z" fill="#27b43e"/></svg>
<div class="a" style="left:569px;top:12.5px;width:18.500px;height:9.500px;border-radius:5px;background:#2a2a2a;border:1px solid #9a9a9a;color:#f0f0f0;font-size:7.500px;line-height:7.500px;font-weight:bold;text-align:center;letter-spacing:-0.300px">99+</div>
<svg class="a" style="left:596.5px;top:5px" width="15" height="16" viewBox="0 0 15 16" preserveAspectRatio="none"><path d="M4.500 0.500h9.500l-2.500 12H2z" fill="#9fd0ee"/><path d="M4.500 0.500h9.500l-0.500 2.400H4z" fill="#cfe8f7"/><path d="M2 12.500h9.500l-0.600 3H1.200z" fill="#d6dde6"/><path d="M11.500 12.500l2.500-12 0.600 1.800-2.400 13.200z" fill="#7a8fa8"/></svg>
<svg class="a" style="left:1133.5px;top:8.5px" width="10" height="7" viewBox="0 0 10 7" preserveAspectRatio="none"><path d="M0.800 6L5 1.600L9.200 6" fill="none" stroke="#fff" stroke-width="1.200"/></svg>
<svg class="a" style="left:1150.5px;top:7px" width="11" height="11" viewBox="0 0 11 11" preserveAspectRatio="none"><g fill="none" stroke="#8a95a8" stroke-width="0.900"><path d="M1 10A9 9 0 0 1 10 1"/><path d="M3.800 10A6.200 6.200 0 0 1 10 3.800"/></g><path d="M6.400 10A3.600 3.600 0 0 1 10 6.400" fill="none" stroke="#fff" stroke-width="1"/><circle cx="9.300" cy="9.600" r="1.200" fill="#fff"/></svg>
<svg class="a" style="left:1164.5px;top:7px" width="12" height="11" viewBox="0 0 12 11" preserveAspectRatio="none"><path d="M0.800 3.800h2L5.600 1.200v8.600L2.800 7.200h-2z" fill="none" stroke="#fff" stroke-width="0.900"/><g fill="none" stroke="#fff" stroke-width="0.800"><path d="M7 3.800a2.400 2.400 0 0 1 0 3.400"/><path d="M8.400 2.400a4.400 4.400 0 0 1 0 6.200" opacity="0.800"/><path d="M9.800 1.200a6.200 6.200 0 0 1 0 8.600" opacity="0.550"/></g></svg>
<svg class="a" style="left:1252.5px;top:6px" width="17" height="17" viewBox="0 0 17 17" preserveAspectRatio="none"><path d="M0.800 0.800h10.400v7.800H6.200L3.600 11V8.600H0.800z" fill="#fff"/><g stroke="#1c2a48" stroke-width="0.700"><path d="M2.500 3h7M2.500 4.800h7M2.500 6.600h7"/></g><circle cx="10.800" cy="11.700" r="4.100" fill="#3a3f4a" stroke="#d0d0d0" stroke-width="0.700"/><path d="M9.700 9.800v3.800M11.900 9.800v3.800" stroke="#fff" stroke-width="0.800"/></svg><div class="a" style="left:1183.5px;top:7.5px;white-space:nowrap;transform-origin:0 0;transform:scaleX(0.7266);font-family:'Liberation Sans',sans-serif;font-size:8.6px;line-height:11px;color:#fff;">ESP</div><div class="a" style="left:1214px;top:1.5px;white-space:nowrap;transform-origin:0 0;transform:scaleX(0.8552);font-family:'Liberation Sans',sans-serif;font-size:8.6px;line-height:11px;color:#fff;">23:36</div><div class="a" style="left:1206.5px;top:12.8px;white-space:nowrap;transform-origin:0 0;transform:scaleX(0.9023);font-family:'Liberation Sans',sans-serif;font-size:8.6px;line-height:11px;color:#fff;">13/6/2025</div>
</div>
</body></html>
